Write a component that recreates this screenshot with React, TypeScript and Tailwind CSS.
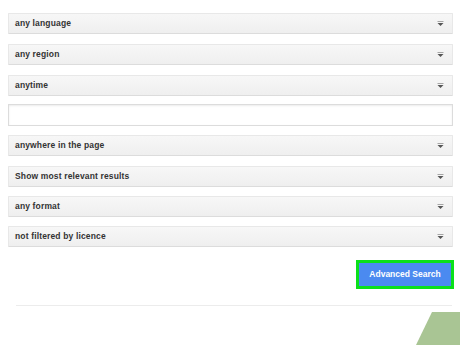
import React from "react"

const selects1 = ["any language", "any region", "anytime"]
const selects2 = ["anywhere in the page", "Show most relevant results", "any format", "not filtered by licence"]

function Arrow() {
  return (
    <svg width="7" height="6" viewBox="0 0 7 6" className="shrink-0">
      <rect x="0.5" y="0" width="6" height="1" fill="#a5a5a5" />
      <polygon points="0.5,2 6.5,2 3.5,5" fill="#555" />
    </svg>
  )
}

function SelectRow({ label, className = "" }: { label: string; className?: string }) {
  return (
    <div
      className={
        "h-[21px] flex items-center justify-between pl-[6px] pr-[8px] bg-gradient-to-b from-[#f7f7f7] to-[#efefef] border border-[#e8e8e8] border-b-[#dcdcdc] rounded-[1px] " +
        className
      }
    >
      <span className="text-[8.5px] font-bold text-[#333] tracking-[0.15px]">{label}</span>
      <Arrow />
    </div>
  )
}

export default function App() {
  return (
    <div
      className="relative w-[460px] h-[345px] bg-white overflow-hidden"
      style={{ fontFamily: '"Liberation Sans", Arial, sans-serif' }}
    >
      <div className="pt-[13px] pl-[8px] pr-[7px] flex flex-col">
        <SelectRow label={selects1[0]} />
        <SelectRow label={selects1[1]} className="mt-[10px]" />
        <SelectRow label={selects1[2]} className="mt-[10px]" />
        <div className="mt-[8px] h-[22px] bg-white border border-[#dcdcdc] shadow-[inset_0_1px_2px_rgba(0,0,0,0.08)]" />
        <SelectRow label={selects2[0]} className="mt-[9px]" />
        <SelectRow label={selects2[1]} className="mt-[10px]" />
        <SelectRow label={selects2[2]} className="mt-[9px]" />
        <SelectRow label={selects2[3]} className="mt-[9px]" />
      </div>

      <div className="flex justify-end pr-[6px] mt-[13px]">
        <button className="h-[29px] w-[98px] border-[3px] border-[#0be01a] bg-[#4b8af0] text-white text-[8.5px] font-bold">
          Advanced Search
        </button>
      </div>

      <div className="ml-[16px] mr-[8px] mt-[16px] h-px bg-[#ececec]" />

      {/* decorative corner */}
      <svg className="absolute right-0 bottom-0" width="44" height="33" viewBox="0 0 44 33">
        <polygon points="16,0 44,0 44,33 0,33" fill="#a9c594" />
      </svg>
    </div>
  )
}
